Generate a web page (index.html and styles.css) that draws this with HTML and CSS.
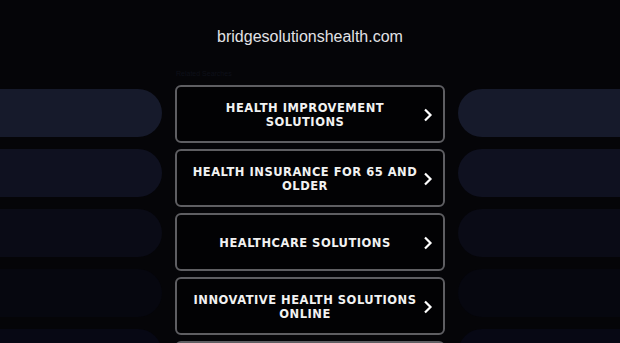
FILE: index.html
```html
<!DOCTYPE html>
<html>
<head>
<meta charset="utf-8">
<link rel="stylesheet" href="styles.css">
</head>
<body>
<div class="page">
  <header class="domain">bridgesolutionshealth.com</header>
  <div class="main">
    <div class="side side-left">
      <div class="pill p1"></div>
      <div class="pill p2"></div>
      <div class="pill p3"></div>
      <div class="pill p4"></div>
      <div class="pill p5"></div>
    </div>
    <div class="center">
      <div class="label">Related Searches</div>
      <a class="btn"><span class="btn-text">HEALTH IMPROVEMENT SOLUTIONS</span><svg class="chev" viewBox="0 0 10 14"><path d="M2 1.5 L7.5 7 L2 12.5" fill="none" stroke="#fff" stroke-width="2.2"/></svg></a>
      <a class="btn"><span class="btn-text">HEALTH INSURANCE FOR 65 AND OLDER</span><svg class="chev" viewBox="0 0 10 14"><path d="M2 1.5 L7.5 7 L2 12.5" fill="none" stroke="#fff" stroke-width="2.2"/></svg></a>
      <a class="btn"><span class="btn-text">HEALTHCARE SOLUTIONS</span><svg class="chev" viewBox="0 0 10 14"><path d="M2 1.5 L7.5 7 L2 12.5" fill="none" stroke="#fff" stroke-width="2.2"/></svg></a>
      <a class="btn"><span class="btn-text">INNOVATIVE HEALTH SOLUTIONS ONLINE</span><svg class="chev" viewBox="0 0 10 14"><path d="M2 1.5 L7.5 7 L2 12.5" fill="none" stroke="#fff" stroke-width="2.2"/></svg></a>
      <a class="btn"><span class="btn-text">HEALTH SOLUTIONS</span><svg class="chev" viewBox="0 0 10 14"><path d="M2 1.5 L7.5 7 L2 12.5" fill="none" stroke="#fff" stroke-width="2.2"/></svg></a>
    </div>
    <div class="side side-right">
      <div class="pill p1"></div>
      <div class="pill p2"></div>
      <div class="pill p3"></div>
      <div class="pill p4"></div>
      <div class="pill p5"></div>
    </div>
  </div>
</div>
</body>
</html>
```
FILE: styles.css
```css
html, body {
  margin: 0;
  padding: 0;
  background: #050508;
  overflow: hidden;
  height: 343px;
}
.page {
  width: 620px;
  font-family: "Liberation Sans", Arial, sans-serif;
}
.domain {
  text-align: center;
  color: #e2e2e6;
  font-size: 16px;
  padding-top: 28px;
  height: 40px;
  line-height: 18px;
}
.main {
  display: flex;
  justify-content: space-between;
}
.side {
  width: 162px;
  display: flex;
  flex-direction: column;
  gap: 12px;
  padding-top: 21px;
}
.side-left .pill {
  margin-left: -40px;
  border-radius: 0 24px 24px 0;
}
.side-right .pill {
  margin-right: -40px;
  border-radius: 24px 0 0 24px;
}
.pill {
  height: 48px;
  flex: none;
}
.p1 { background: #161a2b; }
.p2 { background: #0f1120; }
.p3 { background: #0a0b16; }
.p4 { background: #06070f; }
.p5 { background: #070814; }
.center {
  width: 270px;
  display: flex;
  flex-direction: column;
  gap: 6px;
}
.label {
  font-size: 7px;
  color: #0e1019;
  height: 11px;
  line-height: 7px;
  margin-top: 2px;
  margin-bottom: -2px;
  padding-left: 1px;
}
.btn {
  box-sizing: border-box;
  height: 58px;
  border: 2px solid #5e5e62;
  border-radius: 6px;
  background: #020204;
  display: flex;
  align-items: center;
  padding: 1px 10px 0 12px;
  flex: none;
}
.btn-text {
  flex: 1;
  text-align: center;
  color: #f2f2f2;
  font-family: "DejaVu Sans", Verdana, sans-serif;
  font-weight: bold;
  font-size: 11.5px;
  letter-spacing: 0.5px;
  line-height: 14px;
  padding-left: 2px;
}
.chev {
  width: 10px;
  height: 14px;
  flex: none;
  margin-left: 4px;
}
```
